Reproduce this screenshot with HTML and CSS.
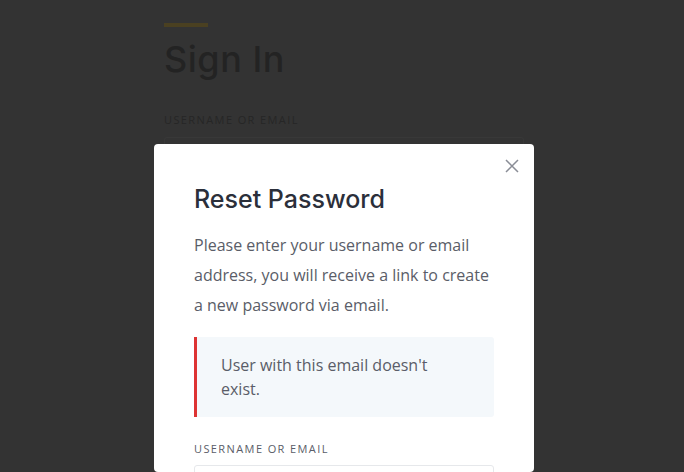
FILE: index.html
```html
<!DOCTYPE html>
<html lang="en">
<head>
    <meta charset="UTF-8">
    <meta name="viewport" content="width=device-width, initial-scale=1.0">
    <title>Sign In</title>
    <link rel="stylesheet" href="styles.css">
</head>
<body>

<div class="page">
    <div class="login">
        <span class="accent"></span>
        <h1>Sign In</h1>
        <label class="field-label">Username or Email</label>
        <div class="field-input"></div>
    </div>
</div>

<div class="overlay">
    <div class="modal">
        <button class="close" aria-label="Close">
            <svg width="14" height="14" viewBox="0 0 14 14">
                <path d="M1 1L13 13M13 1L1 13" stroke="#8a8d96" stroke-width="1.5" fill="none"/>
            </svg>
        </button>
        <h2>Reset Password</h2>
        <p class="intro">Please enter your username or email address, you will receive a link to create a new password via email.</p>
        <div class="alert">User with this email doesn't exist.</div>
        <label class="modal-label">Username or Email</label>
        <div class="modal-input"></div>
    </div>
</div>

</body>
</html>
```

FILE: styles.css
```css
html, body {
    margin: 0;
    padding: 0;
    height: 100%;
}

body {
    background-color: #333333;
    font-family: "Open Sans", Arial, sans-serif;
    overflow: hidden;
}

.page {
    display: flex;
    justify-content: center;
    padding-top: 23px;
}

.login {
    width: 360px;
    margin-left: 4px;
}

.accent {
    display: block;
    width: 44px;
    height: 4px;
    background-color: #4a4021;
}

.login h1 {
    margin: 8px 0 0;
    font-family: Inter, "Open Sans", sans-serif;
    font-weight: 500;
    font-size: 36px;
    line-height: 48px;
    color: #232323;
    letter-spacing: 0.5px;
}

.field-label {
    display: block;
    margin-top: 29px;
    font-size: 11px;
    letter-spacing: 1.4px;
    text-transform: uppercase;
    color: #262626;
}

.field-input {
    margin-top: 10px;
    height: 40px;
    border: 1px solid #383838;
    border-radius: 3px;
}

.overlay {
    position: fixed;
    inset: 0;
    display: flex;
    justify-content: center;
    padding-top: 144px;
}

.modal {
    position: relative;
    width: 300px;
    padding: 35px 40px 40px;
    background-color: #ffffff;
    border-radius: 4px;
    margin-left: 4px;
}

.close {
    position: absolute;
    top: 15px;
    right: 15px;
    width: 14px;
    height: 14px;
    padding: 0;
    border: none;
    background: none;
    cursor: pointer;
}

.modal h2 {
    margin: 0;
    font-family: Inter, "Open Sans", sans-serif;
    font-weight: 500;
    font-size: 25px;
    line-height: 40px;
    color: #2b2f3a;
}

.intro {
    margin: 11px 0 0;
    font-size: 16px;
    line-height: 30px;
    color: #5a5d68;
}

.alert {
    margin-top: 17px;
    padding: 16px 24px 16px 24px;
    background-color: #f4f8fb;
    border-left: 3px solid #dd3333;
    border-radius: 0 3px 3px 0;
    font-size: 16px;
    line-height: 24px;
    color: #5a5d68;
}

.modal-label {
    display: block;
    margin-top: 24px;
    font-size: 11px;
    letter-spacing: 1.4px;
    text-transform: uppercase;
    color: #5a5d68;
}

.modal-input {
    margin-top: 9px;
    height: 40px;
    border: 1px solid #e6e8eb;
    border-radius: 3px;
}
```
